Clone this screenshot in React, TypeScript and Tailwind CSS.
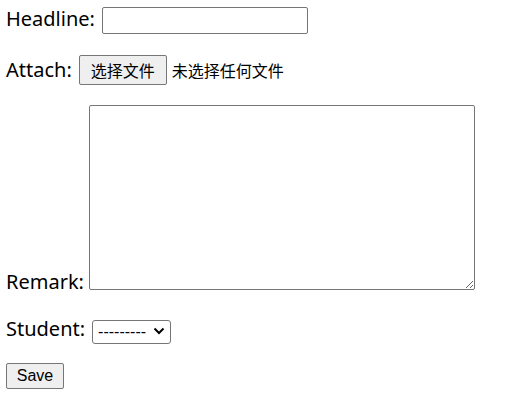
import React from "react";

const labelCls = "text-[20px] text-black whitespace-nowrap";
const labelFont = { fontFamily: '"Noto Sans", "Noto Sans CJK SC", sans-serif' };

export default function App() {
    return (
        <div className="w-[505px] h-[400px] bg-white pl-[6px]" style={labelFont}>
            {/* Headline */}
            <div className="flex items-center gap-[7px] pt-[7px]">
                <label className={`${labelCls} leading-[20px] mb-[4px]`}>Headline:</label>
                <input
                    type="text"
                    className="w-[206px] h-[27px] border border-[#767676] rounded-[2px] bg-white px-[2px] text-[16px] outline-none"
                />
            </div>

            {/* Attach */}
            <div className="flex items-center gap-[7px] mt-[21px]">
                <label className={`${labelCls} leading-[30px]`}>Attach:</label>
                <div className="flex items-center gap-[5px] text-[16px] font-['Noto_Sans_CJK_SC',sans-serif]">
                    <button className="h-[30px] px-[11px] bg-[#efefef] border border-[#767676] rounded-[2px] text-black leading-none">
                        选择文件
                    </button>
                    <span className="text-black">未选择任何文件</span>
                </div>
            </div>

            {/* Remark */}
            <div className="flex items-end gap-[5px] mt-[20px]">
                <label className={`${labelCls} leading-[16px]`}>Remark:</label>
                <textarea className="w-[386px] h-[185px] border border-[#767676] rounded-[2px] bg-white text-[13px] outline-none" />
            </div>

            {/* Student */}
            <div className="flex items-center gap-[7px] mt-[29px]">
                <label className={`${labelCls} leading-[16px] mb-[4px]`}>Student:</label>
                <div className="relative w-[79px] h-[24px]">
                    <select className="appearance-none w-full h-full border border-[#767676] rounded-[3px] bg-white pl-[5px] text-[16px] leading-none text-black font-['Liberation_Sans',Arial,sans-serif] outline-none">
                        <option>---------</option>
                    </select>
                    <svg
                        className="absolute right-[6px] top-[8px] pointer-events-none"
                        width="12"
                        height="8"
                        viewBox="0 0 12 8"
                        fill="none"
                    >
                        <path d="M1.5 1.5 L6 6 L10.5 1.5" stroke="#000" strokeWidth="2" />
                    </svg>
                </div>
            </div>

            {/* Save */}
            <div className="mt-[20px]">
                <button className="w-[58px] h-[26px] bg-[#efefef] border border-[#767676] rounded-[2px] text-[16px] text-black font-['Liberation_Sans',Arial,sans-serif] leading-none">
                    Save
                </button>
            </div>
        </div>
    );
}
